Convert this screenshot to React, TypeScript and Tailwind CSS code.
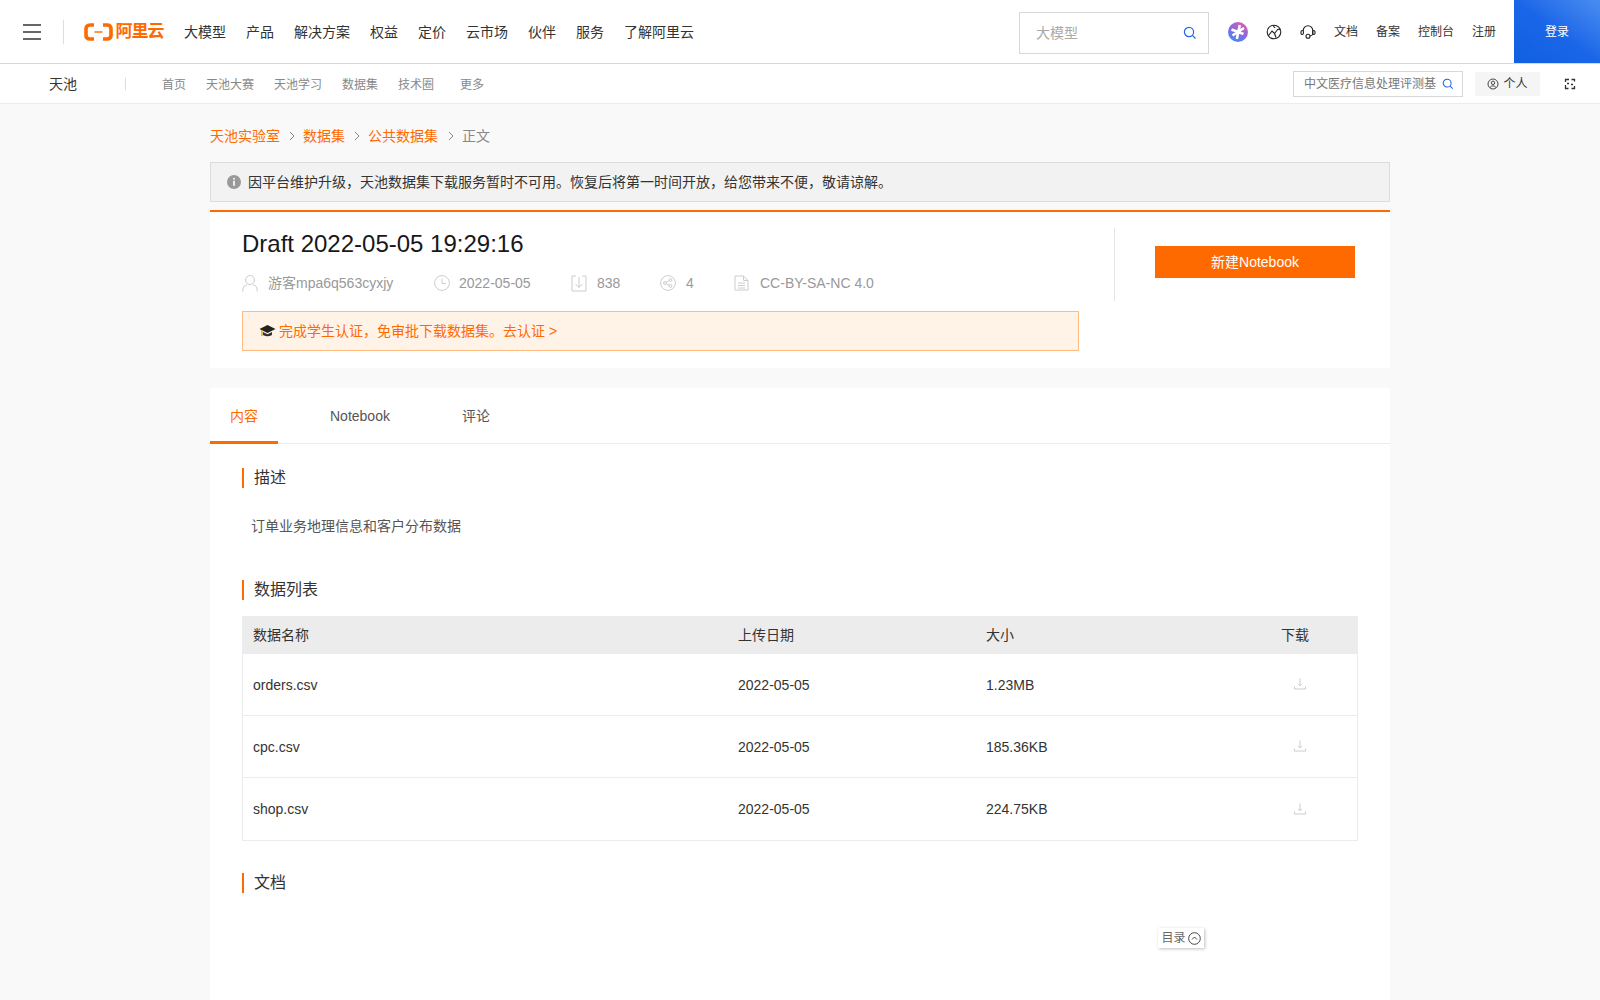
import React from "react";

const Sep = ({ w = "w-[23px]" }: { w?: string }) => (
  <span className={"flex shrink-0 justify-center pl-px " + w}>
    <svg width="8" height="12" viewBox="0 0 8 12" fill="none" stroke="#888" strokeWidth="1">
      <path d="M2 2 L6 6 L2 10" />
    </svg>
  </span>
);

const Search = ({ size = 14 }: { size?: number }) => (
  <svg width={size} height={size} viewBox="0 0 14 14" fill="none" stroke="#1a66e8" strokeWidth="1.2">
    <circle cx="6" cy="6" r="4.6" />
    <path d="M9.4 9.4 L12.5 12.5" />
  </svg>
);

const Dl = () => (
  <svg width="14" height="14" viewBox="0 0 14 14" fill="none" stroke="#ccc" strokeWidth="1">
    <path d="M7 1.5 V8.5 M5 6.8 L7 8.8 L9 6.8 M1.5 9.5 V12 H12.5 V9.5" />
  </svg>
);

const Section = ({ children, className }: { children: React.ReactNode; className?: string }) => (
  <div className={"ml-8 flex h-5 items-center border-l-2 border-[#ff6a00] pl-2.5 text-base text-[#333] " + (className ?? "")}>{children}</div>
);

const Meta = ({ icon, text, w }: { icon: React.ReactNode; text: string; w: string }) => (
  <div className={"flex items-center " + w}>
    {icon}
    <span>{text}</span>
  </div>
);

const rows = [
  ["orders.csv", "2022-05-05", "1.23MB"],
  ["cpc.csv", "2022-05-05", "185.36KB"],
  ["shop.csv", "2022-05-05", "224.75KB"],
];

export default function App() {
  const font = "font-['Liberation_Sans','Noto_Sans_CJK_SC',sans-serif]";
  return (
    <div className={font + " flex h-[1000px] flex-col overflow-hidden bg-[#f9f9f9]"}>
      {/* top bar */}
      <header className="flex h-16 shrink-0 items-center border-b border-[#d8d8d8] bg-white">
        <div className="ml-[23px] flex h-4 w-[18px] flex-col justify-between">
          <span className="h-0.5 bg-[#666]" />
          <span className="h-0.5 bg-[#666]" />
          <span className="h-0.5 bg-[#666]" />
        </div>
        <div className="ml-[21.5px] h-6 w-px bg-[#ddd]" />
        <div className="ml-5 flex items-center gap-[3px]">
          <svg width="29" height="18" viewBox="0 0 29 18" fill="none">
            <path d="M10 2 H6 Q2 2 2 6 V12 Q2 16 6 16 H10" stroke="#ff6a00" strokeWidth="3.6" />
            <path d="M19 2 H23 Q27 2 27 6 V12 Q27 16 23 16 H19" stroke="#ff6a00" strokeWidth="3.6" />
            <path d="M10.5 9 H18.5" stroke="#ff6a00" strokeWidth="1.4" />
          </svg>
          <span className="text-[17px] leading-none font-bold tracking-[-1px] text-[#ff6a00]">阿里云</span>
        </div>
        <nav className="ml-[20.5px] flex gap-5 text-sm text-[#333]">
          {["大模型", "产品", "解决方案", "权益", "定价", "云市场", "伙伴", "服务", "了解阿里云"].map((t) => (
            <span key={t}>{t}</span>
          ))}
        </nav>
        <div className="mt-[3px] ml-auto flex h-[42px] w-[190px] items-center justify-between border border-[#d8d8d8] pr-[11px] pl-4 text-sm text-[#aaa]">
          <span>大模型</span>
          <Search size={14} />
        </div>
        <div className="ml-[19px] flex items-center">
          <svg width="20" height="20" viewBox="0 0 20 20">
            <defs>
              <linearGradient id="g" x1="0.8" y1="0" x2="0.2" y2="1">
                <stop offset="0" stopColor="#e060a8" />
                <stop offset="0.5" stopColor="#8a68e0" />
                <stop offset="1" stopColor="#3a90f0" />
              </linearGradient>
            </defs>
            <circle cx="10" cy="10" r="10" fill="url(#g)" />
            <path d="M11.8 3 L8.8 17 M3.5 7.5 L15.5 12 M16 6 L4.5 13.5" stroke="#fff" strokeWidth="2.6" />
          </svg>
          <svg className="ml-[18px]" width="16" height="16" viewBox="0 0 16 16" fill="none" stroke="#222" strokeWidth="1.1">
            <circle cx="8" cy="8" r="6.8" />
            <path d="M2.5 11.5 L6 7 L8.5 9.5 L12 5 M12 5 L14.5 6" />
            <path d="M8.5 9.5 L10 13.5" />
            <path d="M7 1.5 L9 4" />
          </svg>
          <svg className="ml-[18px]" width="16" height="16" viewBox="0 0 16 16" fill="none" stroke="#222" strokeWidth="1.1">
            <path d="M3.2 7 V6.5 A4.8 4.8 0 0 1 12.8 6.5 V10 Q12.5 11.5 10 12" />
            <rect x="1" y="6.5" width="2.4" height="4" rx="1.2" />
            <rect x="12.6" y="6.5" width="2.4" height="4" rx="1.2" />
            <circle cx="8" cy="12.3" r="2" />
          </svg>
          <div className="ml-[18px] flex gap-[18px] text-xs text-[#333]">
            <span>文档</span>
            <span>备案</span>
            <span>控制台</span>
            <span>注册</span>
          </div>
        </div>
        <div className="ml-[18px] flex h-[63px] w-[86px] items-center justify-center bg-gradient-to-tr from-[#1060e0] via-[#1a66e8] to-[#4a8cf0] text-xs text-white">
          登录
        </div>
      </header>

      {/* sub bar */}
      <div className="flex h-[40px] shrink-0 items-center border-b border-[#ececec] bg-white">
        <span className="ml-[49px] text-sm text-[#333]">天池</span>
        <span className="ml-[48px] h-3 w-px bg-[#ddd]" />
        <div className="mt-[2px] ml-9 flex gap-5 text-xs text-[#888]">
          <span>首页</span>
          <span>天池大赛</span>
          <span>天池学习</span>
          <span>数据集</span>
          <span>技术圈</span>
          <span className="ml-1.5">更多</span>
        </div>
        <div className="ml-auto flex h-[26px] w-[170px] items-center justify-between border border-[#d8d8d8] pr-2 pl-2.5 text-xs text-[#777]">
          <span className="whitespace-nowrap">中文医疗信息处理评测基</span>
          <Search size={12} />
        </div>
        <div className="ml-3 flex h-6 w-[65px] items-center justify-center gap-1 bg-[#f5f5f5] text-xs text-[#333]">
          <svg width="12" height="12" viewBox="0 0 12 12" fill="none" stroke="#333" strokeWidth="0.9">
            <circle cx="6" cy="6" r="5" />
            <circle cx="6" cy="4.8" r="1.7" />
            <path d="M3 9.5 Q6 6 9 9.5" />
          </svg>
          <span>个人</span>
        </div>
        <svg className="mr-6 ml-6" width="12" height="12" viewBox="0 0 12 12" fill="none" stroke="#333" strokeWidth="1.3">
          <path d="M1.5 4 V1.5 H5 M7.5 1.5 H10.5 V3.5 M1.5 7 V10.5 H4.5 M7.5 10.5 H10.5 V8" />
          <path d="M3 5.5 H5 M7 6.5 H9" strokeWidth="1.6" />
        </svg>
      </div>

      {/* page */}
      <main className="mx-auto flex w-[1180px] flex-1 flex-col">
        <div className="mt-[22px] flex h-5 items-center text-sm">
          <span className="text-[#ff6a00]">天池实验室</span>
          <Sep />
          <span className="text-[#ff6a00]">数据集</span>
          <Sep />
          <span className="text-[#ff6a00]">公共数据集</span>
          <Sep w="w-6" />
          <span className="text-[#888]">正文</span>
        </div>

        <div className="mt-4 flex h-10 items-center border border-[#dcdcdc] bg-[#f2f2f2] pl-4 text-sm text-[#333]">
          <svg width="14" height="14" viewBox="0 0 14 14" className="shrink-0">
            <circle cx="7" cy="7" r="7" fill="#999" />
            <rect x="6.2" y="3" width="1.6" height="1.6" fill="#fff" />
            <rect x="6.2" y="5.8" width="1.6" height="5" fill="#fff" />
          </svg>
          <span className="ml-[7px]">因平台维护升级，天池数据集下载服务暂时不可用。恢复后将第一时间开放，给您带来不便，敬请谅解。</span>
        </div>

        {/* head card */}
        <section className="mt-2 flex h-[158px] shrink-0 border-t-2 border-[#ff6a00] bg-white pl-8">
          <div className="flex w-[837px] flex-col">
            <h1 className="mt-[18px] text-2xl leading-7 font-normal text-[#181818]">Draft 2022-05-05 19:29:16</h1>
            <div className="mt-[15px] flex h-5 items-center text-sm text-[#999]">
              <Meta
                w="w-[192px]"
                text="游客mpa6q563cyxjy"
                icon={
                  <svg className="mr-[10px]" width="16" height="18" viewBox="0 0 16 18" fill="none" stroke="#ccc" strokeWidth="1">
                    <circle cx="8" cy="6" r="4.5" />
                    <path d="M0.8 17.5 V16 Q0.8 11.5 5 11 M15.2 17.5 V16 Q15.2 11.5 11 11" />
                  </svg>
                }
              />
              <Meta
                w="w-[137px]"
                text="2022-05-05"
                icon={
                  <svg className="mr-[9px]" width="16" height="16" viewBox="0 0 16 16" fill="none" stroke="#ccc" strokeWidth="1">
                    <circle cx="8" cy="8" r="7.4" />
                    <path d="M8 3.8 V8.5 H12" />
                  </svg>
                }
              />
              <Meta
                w="w-[89px]"
                text="838"
                icon={
                  <svg className="mr-[10px]" width="16" height="18" viewBox="0 0 16 18" fill="none" stroke="#ccc" strokeWidth="1">
                    <path d="M5 2 H1 V17 H15 V2 H11 M8 3 V13.5 M4.5 10 L8 13.5 L11.5 10" />
                  </svg>
                }
              />
              <Meta
                w="w-[74px]"
                text="4"
                icon={
                  <svg className="mr-[10px]" width="16" height="16" viewBox="0 0 16 16" fill="none" stroke="#ccc" strokeWidth="1">
                    <circle cx="8" cy="8" r="7.4" />
                    <circle cx="5" cy="8" r="1.4" />
                    <circle cx="10.5" cy="5" r="1.4" />
                    <circle cx="10.5" cy="11" r="1.4" />
                    <path d="M6.2 7.3 L9.3 5.7 M6.2 8.7 L9.3 10.3" />
                  </svg>
                }
              />
              <Meta
                w="w-auto"
                text="CC-BY-SA-NC 4.0"
                icon={
                  <svg className="mr-[11px]" width="15" height="16" viewBox="0 0 15 16" fill="none" stroke="#ccc" strokeWidth="1">
                    <path d="M1 1 H9.5 L14 5.5 V15 H1 Z M9.5 1 V5.5 H14 M4 8 H11 M4 10.5 H11 M4 13 H11" />
                  </svg>
                }
              />
            </div>
            <div className="mt-[18px] flex h-10 items-center border border-[#ffbb80] bg-[#fff3e8] pl-4 text-sm text-[#ff6a00]">
              <svg className="mr-[3px]" width="17" height="15" viewBox="0 0 17 15">
                <path d="M8.5 1 L16.5 5 L8.5 9 L0.5 5 Z" fill="#222" />
                <path d="M4 8 V11 Q8.5 13.5 13 11 V8 L8.5 10.2 Z" fill="#333" />
                <path d="M3 6 V12" stroke="#d8a020" strokeWidth="1.4" />
              </svg>
              <span>完成学生认证，免审批下载数据集。去认证 &gt;</span>
            </div>
          </div>
          <div className="mt-4 ml-[35px] h-[73px] w-px bg-[#e5e5e5]" />
          <button className="mt-[34px] ml-10 h-8 w-[200px] bg-[#ff6a00] text-sm text-white">新建Notebook</button>
        </section>

        {/* content card */}
        <section className="relative mt-5 flex-1 bg-white">
          <div className="flex h-14 border-b border-[#ececec] text-sm text-[#555]">
            <div className="flex h-14 w-[68px] items-center justify-center border-b-[3px] border-[#ff6a00] pt-[3px] text-[#ff6a00]">内容</div>
            <div className="ml-[52px] flex items-center">Notebook</div>
            <div className="ml-[72px] flex items-center">评论</div>
          </div>

          <Section className="mt-6">描述</Section>
          <p className="mt-[28px] ml-[41px] h-5 text-sm leading-5 text-[#555]">订单业务地理信息和客户分布数据</p>

          <Section className="mt-[44px]">数据列表</Section>
          <div className="mx-8 mt-4 border-x border-b border-[#ececec]">
            <div className="-mx-px grid h-[38px] grid-cols-[485px_248px_248px_1fr] items-center bg-[#ececec] pl-[11px] text-sm text-[#333]">
              <span>数据名称</span>
              <span>上传日期</span>
              <span>大小</span>
              <span className="pl-[47px]">下载</span>
            </div>
            {rows.map((r, i) => (
              <div
                key={r[0]}
                className={"grid h-[62px] grid-cols-[485px_248px_248px_1fr] items-center pl-[10px] text-sm text-[#333] " + (i < 2 ? "border-b border-[#ececec]" : "")}
              >
                <span>{r[0]}</span>
                <span>{r[1]}</span>
                <span>{r[2]}</span>
                <span className="-mt-px flex pl-[59px]">
                  <Dl />
                </span>
              </div>
            ))}
          </div>

          <Section className="mt-[32px]">文档</Section>

          <div className="absolute top-[540px] left-[948px] flex h-5 w-[46px] items-center justify-center gap-[2px] bg-white text-xs text-[#666] shadow-[1px_1px_3px_rgba(0,0,0,0.25)]">
            <span>目录</span>
            <svg width="13" height="13" viewBox="0 0 13 13" fill="none" stroke="#444" strokeWidth="1">
              <circle cx="6.5" cy="6.5" r="5.8" />
              <path d="M4 7.5 L6.5 5 L9 7.5" />
            </svg>
          </div>
        </section>
      </main>
    </div>
  );
}
